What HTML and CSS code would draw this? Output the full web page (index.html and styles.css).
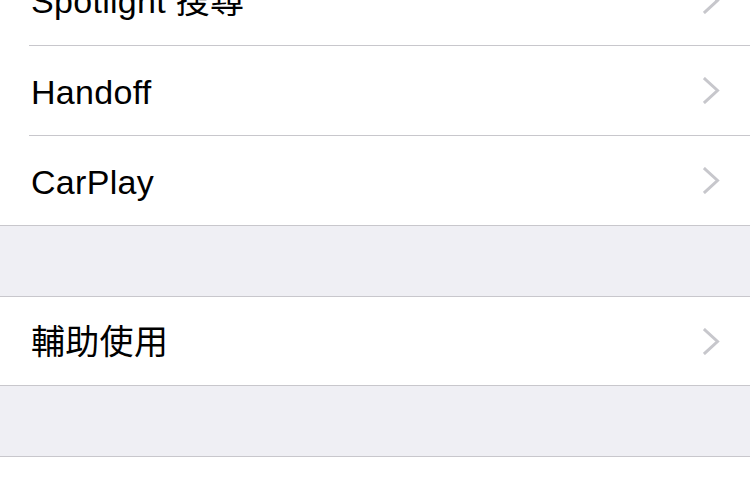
FILE: index.html
```html
<!DOCTYPE html>
<html lang="zh-Hant">
<head>
    <meta charset="UTF-8">
    <meta name="viewport" content="width=device-width, initial-scale=1.0">
    <title>一般</title>
    <link rel="stylesheet" href="styles.css">
</head>
<body>
    <div class="settings">
        <ul class="group">
            <li class="row">
                <span class="label">Spotlight 搜尋</span>
                <svg class="chevron" viewBox="0 0 18 27"><polyline points="2,2 14.5,13.5 2,25"/></svg>
            </li>
            <li class="row">
                <span class="label">Handoff</span>
                <svg class="chevron" viewBox="0 0 18 27"><polyline points="2,2 14.5,13.5 2,25"/></svg>
            </li>
            <li class="row">
                <span class="label">CarPlay</span>
                <svg class="chevron" viewBox="0 0 18 27"><polyline points="2,2 14.5,13.5 2,25"/></svg>
            </li>
        </ul>

        <div class="spacer"></div>

        <ul class="group group-single">
            <li class="row">
                <span class="label">輔助使用</span>
                <svg class="chevron" viewBox="0 0 18 27"><polyline points="2,2 14.5,13.5 2,25"/></svg>
            </li>
        </ul>

        <div class="spacer"></div>

        <ul class="group group-empty"></ul>
    </div>
</body>
</html>
```

FILE: styles.css
```css
html, body {
    margin: 0;
    padding: 0;
    background-color: #ffffff;
}
body {
    font-family: "Liberation Sans", "Noto Sans CJK TC", sans-serif;
    color: #000;
    overflow: hidden;
    height: 480px;
}
.settings {
    /* list is scrolled so the first row is half hidden */
    margin-top: -45px;
}
.group {
    list-style: none;
    margin: 0;
    padding: 0;
    background-color: #fff;
}
.group-empty {
    height: 24px;
}
.row {
    box-sizing: border-box;
    display: flex;
    align-items: center;
    justify-content: space-between;
    height: 90px;
    padding-left: 31px;
    padding-right: 29px;
    position: relative;
}
.group-single .row {
    height: 88px;
}
.row + .row {
    border-top: 1px solid #c8c7cc;
    border-image: linear-gradient(to right, transparent 30px, #c8c7cc 30px) 1;
}
.label {
    font-size: 34px;
    line-height: 38px;
    letter-spacing: 0.3px;
    margin-top: 2px;
}
.chevron {
    width: 18px;
    height: 27px;
    fill: none;
    stroke: #c7c7cc;
    stroke-width: 3;
    stroke-linecap: square;
}
.spacer {
    height: 70px;
    background-color: #efeff4;
    border-top: 1px solid #c8c7cc;
    border-bottom: 1px solid #c8c7cc;
}
```
